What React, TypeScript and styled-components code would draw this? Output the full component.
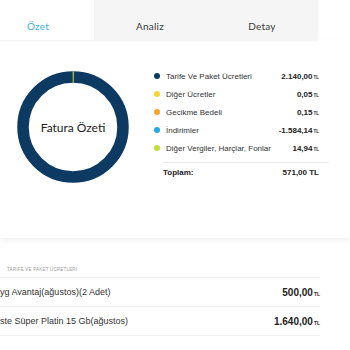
import React from "react";
import styled, { createGlobalStyle } from "styled-components";

const Global = createGlobalStyle`
  html, body { margin: 0; padding: 0; background: #ffffff; }
  body { width: 350px; height: 350px; overflow: hidden; font-family: "Liberation Sans", Arial, sans-serif; }
`;

const Page = styled.div`
  width: 350px;
  height: 350px;
  overflow: hidden;
  background: #ffffff;
`;

const TabBar = styled.div`
  display: flex;
  margin-left: -18px;
  width: 336px;
  height: 40px;
  box-shadow: 0 1px 2px rgba(0, 0, 0, 0.06);
  position: relative;
  z-index: 2;
`;

const Tab = styled.div<{ $active?: boolean }>`
  flex: 1;
  display: flex;
  align-items: center;
  justify-content: center;
  padding-top: 12px;
  box-sizing: border-box;
  background: ${(p) => (p.$active ? "#ffffff" : "#f5f5f5")};
  color: ${(p) => (p.$active ? "#39b1df" : "#3a3a3a")};
  font-family: Lato, "Noto Sans", sans-serif;
  font-size: 10px;
  letter-spacing: 0.2px;
`;

const Summary = styled.div`
  display: flex;
  height: 198px;
  box-shadow: 0 3px 6px rgba(0, 0, 0, 0.06);
  position: relative;
  z-index: 1;
`;

const ChartWrap = styled.div`
  position: relative;
  width: 112px;
  height: 112px;
  margin: 31px 0 0 17px;
  flex: none;
`;

const ChartLabel = styled.div`
  position: absolute;
  inset: 0;
  display: flex;
  align-items: center;
  justify-content: center;
  font-family: Lato, "Noto Sans", sans-serif;
  font-size: 12px;
  color: #222;
`;

const Legend = styled.div`
  margin: 27px 0 0 25px;
  width: 175px;
  display: flex;
  flex-direction: column;
`;

const LegendRow = styled.div`
  display: flex;
  align-items: center;
  height: 18px;
  font-size: 8px;
  color: #333;
`;

const Dot = styled.span<{ $color: string }>`
  width: 6px;
  height: 6px;
  border-radius: 50%;
  background: ${(p) => p.$color};
  margin-right: 6px;
  flex: none;
`;

const LegendName = styled.span`
  flex: 1;
`;

const Amount = styled.span<{ $size?: number; $gap?: number }>`
  font-weight: bold;
  color: #222;
  font-size: ${(p) => p.$size ?? 8}px;
  margin-right: ${(p) => p.$gap ?? 10}px;
  white-space: nowrap;
`;

const Unit = styled.span<{ $size?: number }>`
  font-size: ${(p) => p.$size ?? 4.5}px;
  margin-left: 1px;
`;

const Divider = styled.div`
  height: 1px;
  background: #ececec;
  margin: 5px 0 0 9px;
`;

const TotalRow = styled.div`
  display: flex;
  align-items: center;
  height: 18px;
  padding-left: 9px;
  font-size: 8px;
  font-weight: bold;
  color: #222;
`;

const Section = styled.div`
  padding-top: 29px;
`;

const SectionTitle = styled.div`
  font-size: 4.5px;
  color: #9a9a9a;
  text-transform: uppercase;
  letter-spacing: 0.2px;
  padding-left: 7px;
  height: 10px;
  line-height: 5px;
  border-bottom: 1px solid #eeeeee;
  width: 313px;
`;

const ItemRow = styled.div`
  display: flex;
  align-items: center;
  width: 320px;
  height: 28px;
  border-bottom: 1px solid #f0f0f0;
  font-size: 9px;
  color: #333;
`;

const ItemName = styled.span`
  flex: 1;
  white-space: nowrap;
`;

const legend = [
  { name: "Tarife Ve Paket Ücretleri", value: "2.140,00", color: "#0c3a62" },
  { name: "Diğer Ücretler", value: "0,05", color: "#f5d632" },
  { name: "Gecikme Bedeli", value: "0,15", color: "#f5a62b" },
  { name: "İndirimler", value: "-1.584,14", color: "#27a8e0" },
  { name: "Diğer Vergiler, Harçlar, Fonlar", value: "14,94", color: "#c4dc3c" },
];

const items = [
  { name: "yg Avantaj(ağustos)(2 Adet)", value: "500,00" },
  { name: "ste Süper Platin 15 Gb(ağustos)", value: "1.640,00" },
];

function Donut() {
  const r = 50;
  const c = 2 * Math.PI * r;
  const tick = 1.6;
  return (
    <svg width="112" height="112" viewBox="0 0 112 112">
      <circle cx="56" cy="56" r={r} fill="none" stroke="#0c3a62" strokeWidth="11.5" />
      <circle
        cx="56"
        cy="56"
        r={r}
        fill="none"
        stroke="#c4dc3c"
        strokeWidth="11.5"
        strokeDasharray={`${tick} ${c - tick}`}
        strokeDashoffset={tick / 2}
        transform="rotate(-90 56 56)"
      />
    </svg>
  );
}

export default function App() {
  return (
    <Page>
      <Global />
      <TabBar>
        <Tab $active>Özet</Tab>
        <Tab>Analiz</Tab>
        <Tab>Detay</Tab>
      </TabBar>
      <Summary>
        <ChartWrap>
          <Donut />
          <ChartLabel>Fatura Özeti</ChartLabel>
        </ChartWrap>
        <Legend>
          {legend.map((l) => (
            <LegendRow key={l.name}>
              <Dot $color={l.color} />
              <LegendName>{l.name}</LegendName>
              <Amount>
                {l.value}
                <Unit>TL</Unit>
              </Amount>
            </LegendRow>
          ))}
          <Divider />
          <TotalRow>
            <LegendName>Toplam:</LegendName>
            <Amount>571,00 TL</Amount>
          </TotalRow>
        </Legend>
      </Summary>
      <Section>
        <SectionTitle>Tarife ve Paket Ücretleri</SectionTitle>
        {items.map((it) => (
          <ItemRow key={it.name}>
            <ItemName>{it.name}</ItemName>
            <Amount $size={10} $gap={0}>
              {it.value}
              <Unit $size={5}>TL</Unit>
            </Amount>
          </ItemRow>
        ))}
      </Section>
    </Page>
  );
}
